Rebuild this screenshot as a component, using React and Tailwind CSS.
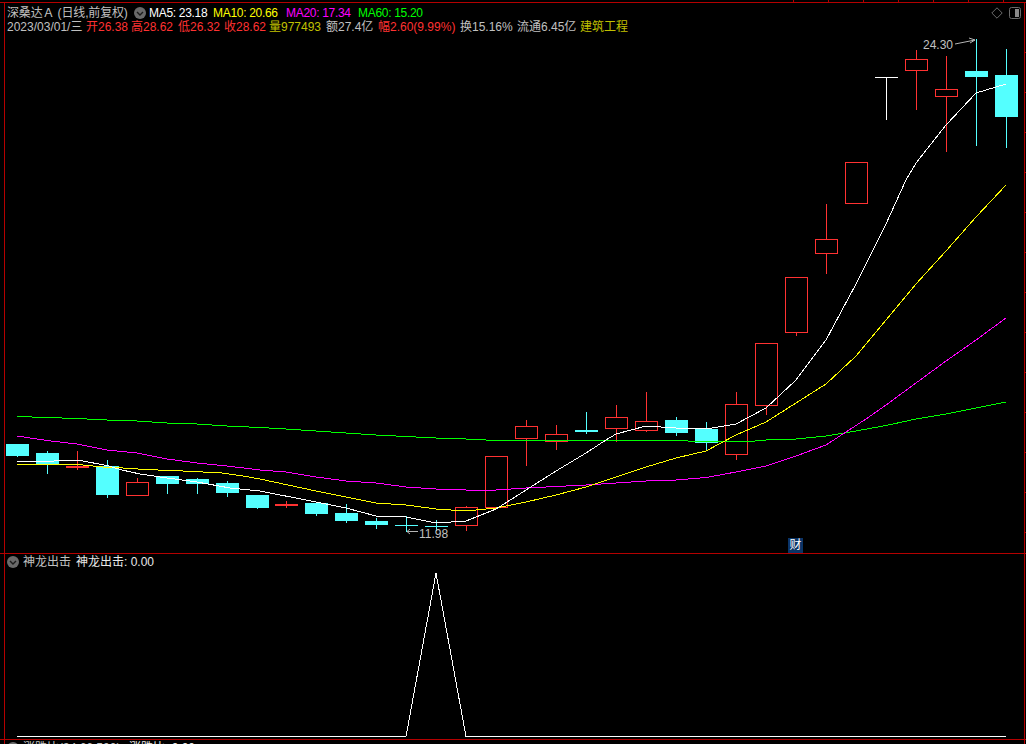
const RED = "#ff3232";
const CYAN = "#54ffff";

const candles = [
  ["c", 444, 444, 456, 457], ["c", 451, 453, 464, 474], ["R", 451, 466, 468, 470], ["c", 460, 466, 495, 498],
  ["r", 478, 482, 495, 495], ["c", 476, 476, 484, 494], ["c", 478, 479, 484, 494], ["c", 481, 483, 493, 497],
  ["c", 495, 495, 508, 509], ["R", 501, 504, 506, 508], ["c", 503, 503, 514, 516], ["c", 504, 513, 521, 523],
  ["c", 518, 521, 525, 529], ["c", 516, 525, 526, 532], ["c", 520, 526, 527, 531], ["r", 506, 507, 525, 531],
  ["r", 456, 456, 507, 508], ["r", 420, 426, 438, 466], ["r", 425, 434, 441, 450], ["c", 412, 430, 432, 434],
  ["r", 405, 417, 428, 442], ["r", 392, 421, 430, 432], ["c", 417, 420, 433, 436], ["c", 422, 429, 443, 450],
  ["r", 392, 404, 454, 460], ["r", 343, 343, 405, 415], ["r", 277, 277, 332, 336], ["r", 204, 239, 253, 274],
  ["r", 162, 162, 203, 203], ["w", 77, 77, 78, 120], ["r", 50, 59, 70, 110], ["r", 56, 89, 96, 152],
  ["c", 39, 71, 77, 146], ["c", 49, 75, 117, 148],
];

const ma5 = "17,461.5 47,461.5 62,460.5 80,460.5 107,465.5 122,470 140,474 167,478 197,482 230,488 260,491 316,502 346,508 376,516 406,517 436,523 466,521 496,509 526,490 556,471 586,453 606,440 616,434 646,426 676,428 706,429 736,424 766,408 796,380 826,340 856,284 886,224 906,180 916,163 946,125 976,93 1006,84";
const ma10 = "17,464.5 33,465 62,464.5 83,465 103,467 123,468 145,469.5 183,471 203,472 222,473 240,475.5 260,479 316,491 346,497 376,503 406,505 436,509 466,511 496,508 526,502 556,495 586,487 616,477 646,467 676,458 706,451 736,435 766,422 796,403 826,384 856,356 886,320 916,284 946,251 976,217 1006,185";
const ma20 = "17,436 47,440.5 77,444 107,450 137,453 167,459 197,463 227,466 260,470 286,472 316,477 346,481 376,483 406,487 436,489 466,490 496,490 526,488 556,486.5 586,485 616,483 646,481 676,480 706,477.5 736,472 766,466 796,456 826,445 846,432 866,419 886,405 916,383 946,361 976,340 1006,318";
const ma60 = "17,416.5 47,417.5 77,418.5 107,420 137,421 167,423 197,424 227,426 260,427.5 286,429 316,431 346,433 376,435 406,436.5 436,438 466,439 496,440.5 676,440.5 700,441.5 750,441.5 766,440 796,439 826,436 856,431 886,425.5 916,419 946,414 976,408 1006,402";

const rightTicks = Array.from({ length: 13 }, (_, i) => 52 + 40 * i);
const topTicks = [793, 828, 863, 898, 933, 968, 1003];

function Chevron() {
  return (
    <svg width="12" height="12" viewBox="0 0 12 12" className="block">
      <circle cx="6" cy="6" r="6" fill="#6a6a6a" />
      <path d="M3 5 L6 8 L9 5" fill="none" stroke="#1c1c1c" strokeWidth="1.4" />
    </svg>
  );
}

function Candle({ d, i }) {
  const [type, hi, top, bot, lo] = d;
  const l = i < 9 ? 6 + 30 * i : 5 + 30 * i;
  const color = type === "c" ? CYAN : type === "w" ? "#ffffff" : RED;
  const x = l + 11.5;
  return (
    <g>
      <line x1={x} x2={x} y1={hi} y2={lo} stroke={color} />
      {type === "r" ? (
        <rect x={l + 0.5} y={top + 0.5} width={22} height={bot - top} fill="#000" stroke={color} />
      ) : (
        <rect x={l} y={top} width={23} height={bot - top} fill={color} />
      )}
    </g>
  );
}

function Item({ w, className = "", children }) {
  return <span className={`shrink-0 whitespace-nowrap ${w} ${className}`}>{children}</span>;
}

export default function App() {
  return (
    <div
      className="w-[1026px] h-[744px] bg-black overflow-hidden flex flex-col text-[12px] leading-[14px] text-[#c0c0c0]"
      style={{ fontFamily: '"Liberation Sans","Noto Sans CJK SC",sans-serif' }}
    >
      <svg width="1026" height="2" className="block shrink-0">
        {topTicks.map((x) => (
          <line key={x} x1={x + 0.5} x2={x + 0.5} y1="0" y2="2" stroke="#b40000" />
        ))}
      </svg>
      <div className="h-px shrink-0 bg-[#b40000]" />

      <section className="ml-1 mr-px h-[550px] shrink-0 border-x border-[#b40000] relative flex flex-col">
        <div className="h-[30px] shrink-0 pl-[2px] pt-[3px]">
          <div className="flex items-center h-[14px]">
            <Item w="w-[127px]" className="tracking-[-0.15px]">深桑达Ａ (日线,前复权)</Item>
            <span className="w-[15px] shrink-0"><Chevron /></span>
            <Item w="w-[64px]" className="text-white tracking-[-0.3px]">MA5: 23.18</Item>
            <Item w="w-[73px]" className="text-[#ffff00] tracking-[-0.3px]">MA10: 20.66</Item>
            <Item w="w-[72px]" className="text-[#ff00ff] tracking-[-0.3px]">MA20: 17.34</Item>
            <Item w="w-[70px]" className="text-[#00ff00] tracking-[-0.3px]">MA60: 15.20</Item>
            <span className="ml-auto mr-[3px] flex items-center gap-[6px]">
              <svg width="12" height="12" viewBox="0 0 12 12">
                <path d="M6 .8 L11.2 6 L6 11.2 L.8 6 Z" fill="none" stroke="#6a6a6a" />
              </svg>
              <svg width="12" height="12" viewBox="0 0 12 12">
                <rect x=".5" y=".5" width="11" height="11" rx="2" fill="none" stroke="#6a6a6a" />
                <rect x="6" y="2" width="4" height="8" fill="#8a8a8a" />
              </svg>
            </span>
          </div>
          <div className="flex items-center h-[14px]">
            <Item w="w-[79px]">2023/03/01/三</Item>
            <Item w="w-[45px]" className="text-[#ff3232]">开26.38</Item>
            <Item w="w-[47px]" className="text-[#ff3232]">高28.62</Item>
            <Item w="w-[46px]" className="text-[#ff3232]">低26.32</Item>
            <Item w="w-[45px]" className="text-[#ff3232]">收28.62</Item>
            <Item w="w-[57px]" className="text-[#c0c000]">量977493</Item>
            <Item w="w-[52px]">额27.4亿</Item>
            <Item w="w-[82px]" className="text-[#ff3232]">幅2.60(9.99%)</Item>
            <Item w="w-[57px]">换15.16%</Item>
            <Item w="w-[63px]">流通6.45亿</Item>
            <Item w="w-[48px]" className="text-[#c0c000]">建筑工程</Item>
          </div>
        </div>
        <svg width="1019" height="520" viewBox="5 33 1019 520" className="block shrink-0 overflow-visible" shapeRendering="crispEdges">
          {rightTicks.map((y) => (
            <line key={y} x1="1025" x2="1026" y1={y + 0.5} y2={y + 0.5} stroke="#b40000" />
          ))}
          {candles.map((d, i) => (
            <Candle key={i} d={d} i={i} />
          ))}
          <polyline points={ma60} fill="none" stroke="#00ff00" />
          <polyline points={ma20} fill="none" stroke="#ff00ff" />
          <polyline points={ma10} fill="none" stroke="#ffff00" />
          <polyline points={ma5} fill="none" stroke="#ffffff" />
          <path d="M955 44 L975 40 M969 38 L975 40 L970 43" fill="none" stroke="#b4b4b4" shapeRendering="auto" />
          <text x="923" y="49" fontSize="12" fill="#c0c0c0">24.30</text>
          <path d="M418 531.5 L407 531.5 M410 529 L407 531.5 L410 534" fill="none" stroke="#b4b4b4" shapeRendering="auto" />
          <text x="419" y="538" fontSize="12" fill="#c0c0c0">11.98</text>
        </svg>
        <span className="absolute left-[783px] bottom-0 w-[15px] h-[15px] bg-[#0a3466] text-white text-[12px] leading-[15px] text-center">财</span>
      </section>
      <div className="h-px shrink-0 bg-[#b40000]" />

      <section className="ml-1 mr-px h-[185px] shrink-0 border-x border-[#b40000] flex flex-col">
        <div className="h-[16px] shrink-0 pl-[2px] flex items-center">
          <span className="w-[16px] shrink-0"><Chevron /></span>
          <Item w="w-[53px]">神龙出击</Item>
          <Item w="w-[90px]" className="text-[#e8e8e8]">神龙出击: 0.00</Item>
        </div>
        <svg width="1019" height="169" viewBox="5 570 1019 169" className="block shrink-0" shapeRendering="crispEdges">
          <polyline points="17,736.5 406,736.5 436,573 466,736.5 1006,736.5" fill="none" stroke="#ffffff" />
        </svg>
      </section>
      <div className="h-px shrink-0 bg-[#b40000]" />

      <section className="ml-1 mr-px flex-1 border-x border-[#b40000] overflow-hidden">
        <div className="h-[16px] pl-[2px] flex items-center">
          <span className="w-[16px] shrink-0"><Chevron /></span>
          <Item w="w-[106px]">涨跌比(34,66,500)</Item>
          <Item w="w-[90px]" className="text-[#e8e8e8]">涨跌比: 0.00</Item>
        </div>
      </section>
    </div>
  );
}
